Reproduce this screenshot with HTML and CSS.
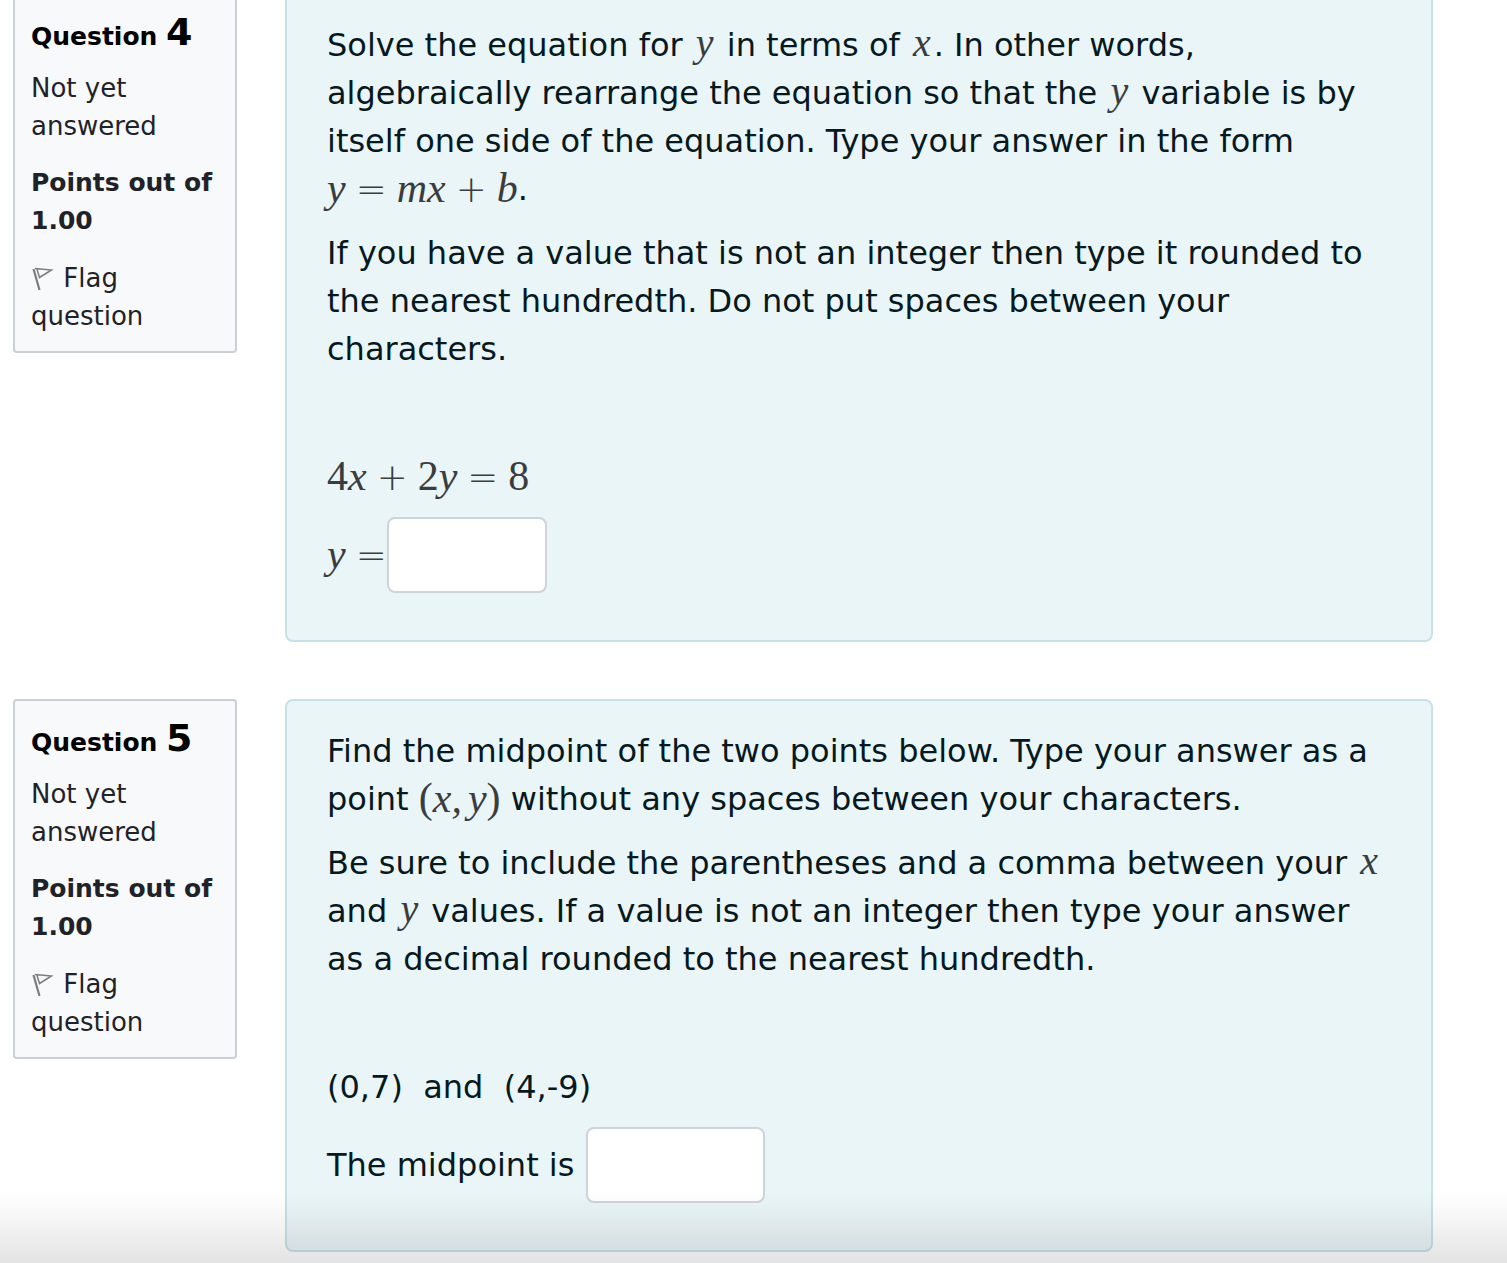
FILE: index.html
```html
<!DOCTYPE html>
<html lang="en">
<head>
  <meta charset="UTF-8" />
  <meta name="viewport" content="width=device-width, initial-scale=1.0"/>
  <title>Quiz</title>
  <link rel="stylesheet" href="styles.css">
</head>
<body>

<main class="quiz">

  <!-- Question 4 -->
  <section class="question">
    <div class="info">
      <h3>Question <span class="number">4</span></h3>
      <p>Not yet answered</p>
      <p class="points">Points out of 1.00</p>
      <a class="flag" href="#"><svg class="flag-icon" viewBox="0 0 24 26" aria-hidden="true"><path d="M2.500 3L8.500 24" stroke-width="2.200"/><path d="M4 2.500L20.500 4L8.500 11.500L6 3.500" stroke-width="1.500"/></svg> Flag question</a>
    </div>
    <div class="content">
      <p>Solve the equation for <span class="math var">y</span> in terms of <span class="math var">x</span>. In other words, algebraically rearrange the equation so that the <span class="math var">y</span> variable is by itself one side of the equation. Type your answer in the form <span class="math formula">y<span class="op">=</span>mx<span class="op">+</span>b</span>.</p>
      <p>If you have a value that is not an integer then type it rounded to the nearest hundredth. Do not put spaces between your characters.</p>
      <p>&nbsp;</p>
      <p><span class="math formula"><span class="num">4</span>x<span class="op">+</span><span class="num">2</span>y<span class="op">=</span><span class="num">8</span></span></p>
      <div class="answer">
        <label for="q4"><span class="math formula">y<span class="op last">=</span></span></label>
        <input type="text" id="q4" class="short" />
      </div>
    </div>
  </section>

  <!-- Question 5 -->
  <section class="question">
    <div class="info">
      <h3>Question <span class="number">5</span></h3>
      <p>Not yet answered</p>
      <p class="points">Points out of 1.00</p>
      <a class="flag" href="#"><svg class="flag-icon" viewBox="0 0 24 26" aria-hidden="true"><path d="M2.500 3L8.500 24" stroke-width="2.200"/><path d="M4 2.500L20.500 4L8.500 11.500L6 3.500" stroke-width="1.500"/></svg> Flag question</a>
    </div>
    <div class="content">
      <p>Find the midpoint of the two points below. Type your answer as a point <span class="math formula"><span class="num">(</span>x<span class="comma">,</span>y<span class="num">)</span></span> without any spaces between your characters.</p>
      <p>Be sure to include the parentheses and a comma between your <span class="math var">x</span> and <span class="math var">y</span> values. If a value is not an integer then type your answer as a decimal rounded to the nearest hundredth.</p>
      <p>&nbsp;</p>
      <p>(0,7)&nbsp; and&nbsp; (4,-9)</p>
      <div class="answer spaced">
        <label for="q5">The midpoint is</label>
        <input type="text" id="q5" />
      </div>
    </div>
  </section>

</main>

<div class="fade"></div>

</body>
</html>
```
FILE: styles.css
```css
:root {
  --text: #1f2328;
  --content-text: #06191e;
  --content-bg: #eaf5f8;
  --content-border: #c5e2e9;
  --info-bg: #f8f9fb;
  --border: #cacfd4;
  --math: #3a3d3e;
  --font: Verdana, 'DejaVu Sans', sans-serif;
}

* {
  box-sizing: border-box;
  margin: 0;
  padding: 0;
}

body {
  background-color: #fff;
  color: var(--text);
  font-family: var(--font);
  overflow: hidden;
}

.quiz {
  display: flex;
  flex-direction: column;
  gap: 57px;
  margin-top: -7px;
  padding: 0 74px 12px 13px;
}

.question {
  display: flex;
  align-items: flex-start;
  gap: 48px;
}

/* Info box */
.info {
  flex: 0 0 224px;
  display: flex;
  flex-direction: column;
  gap: 19px;
  padding: 16px;
  background-color: var(--info-bg);
  border: 2px solid var(--border);
  border-radius: 4px;
  font-size: 26px;
  line-height: 38px;
}

.info h3 {
  margin-bottom: -8px;
  color: #000;
  font-size: 25px;
  line-height: 42px;
}

.number {
  font-size: 38px;
}

.points {
  font-size: 25px;
  font-weight: bold;
}

.flag {
  color: var(--text);
  text-decoration: none;
}

.flag-icon {
  width: 24px;
  height: 26px;
  vertical-align: -5px;
  fill: none;
  stroke: #7d7d7d;
}

/* Question text */
.content {
  flex: 1;
  padding: 26px 44px 47px 40px;
  background-color: var(--content-bg);
  border: 2px solid var(--content-border);
  border-radius: 8px;
  color: var(--content-text);
  font-size: 32px;
  line-height: 48px;
}

.content p {
  margin-bottom: 16px;
}

.math {
  color: var(--math);
  font-family: 'Liberation Serif', serif;
  font-size: 40px;
  font-style: italic;
  line-height: 1;
  white-space: nowrap;
}

.var {
  padding: 0 3px;
}

.formula {
  font-size: 42px;
  vertical-align: -2px;
}

.num {
  font-style: normal;
}

.op {
  padding: 0 10px;
  font-family: 'DejaVu Sans', sans-serif;
  font-size: 37px;
  font-style: normal;
  font-weight: 200;
}

.op.last {
  padding-right: 0;
}

.comma {
  padding-right: 6px;
}

.answer {
  display: flex;
  align-items: center;
}

.spaced {
  gap: 12px;
}

.answer input {
  width: 179px;
  height: 76px;
  padding: 12px 16px;
  background-color: #fff;
  border: 2px solid #ced4da;
  border-radius: 8px;
  color: var(--text);
  font-family: inherit;
  font-size: 32px;
}

.answer .short {
  width: 160px;
}

/* Shade along the bottom edge */
.fade {
  position: fixed;
  left: 0;
  right: 0;
  bottom: 0;
  height: 72px;
  background: linear-gradient(rgba(0, 0, 0, 0), rgba(0, 0, 0, 0.03) 35%, rgba(0, 0, 0, 0.11));
  pointer-events: none;
}
```
